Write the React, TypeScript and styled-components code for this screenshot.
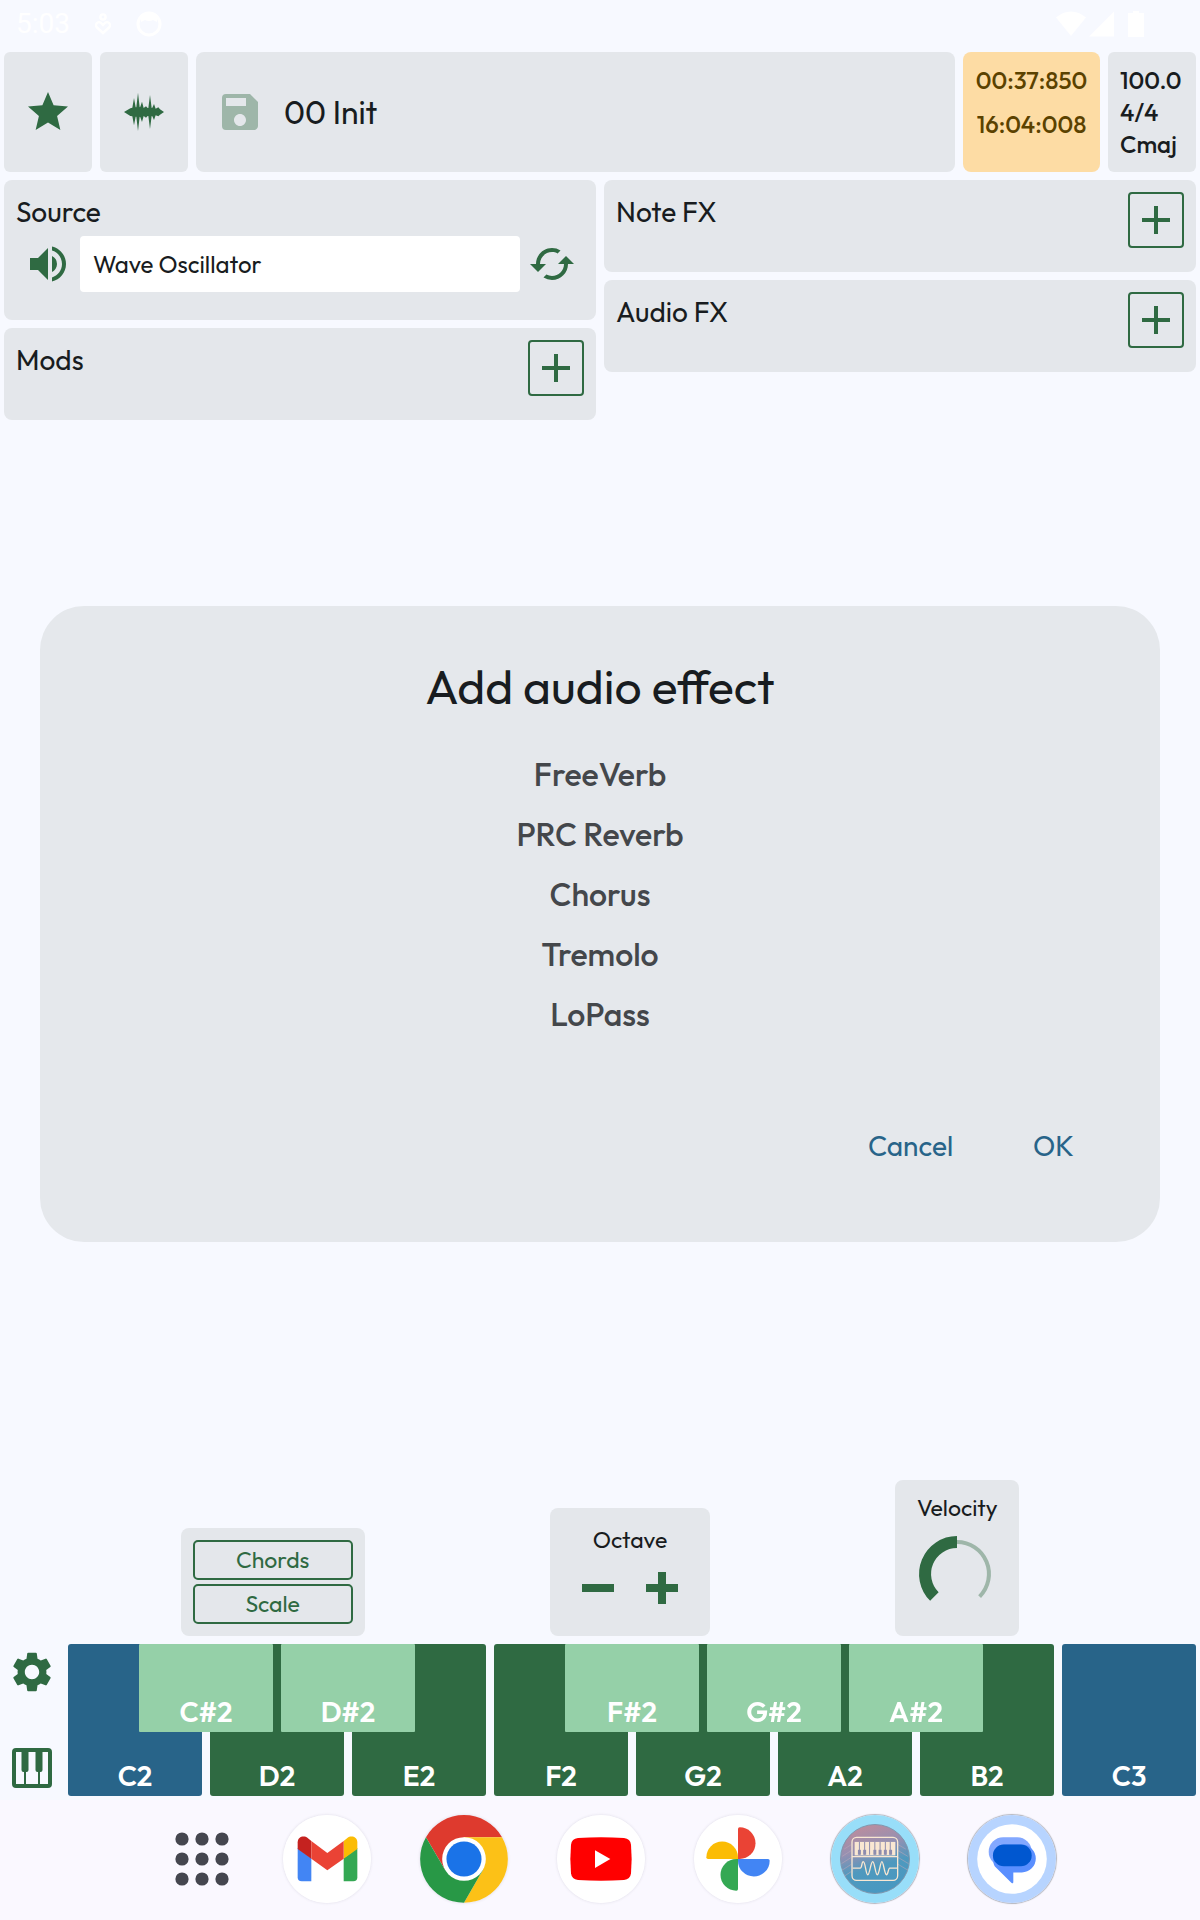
import React from "react";
import styled, { createGlobalStyle } from "styled-components";
import {
  MdStar,
  MdSave,
  MdVolumeUp,
  MdCached,
  MdSettings,
} from "react-icons/md";

const color = {
  page: "#f7f9ff",
  dock: "#faf8ff",
  card: "#e4e7eb",
  ink: "#181c20",
  muted: "#44474b",
  green: "#2f6a42",
  greenSoft: "#9eb6a9",
  mint: "#95d0a8",
  blue: "#286489",
  amber: "#fddca4",
  amberInk: "#5b4200",
};

const Global = createGlobalStyle`
  *, *::before, *::after { box-sizing: border-box; }
  body { margin: 0; background: ${color.page}; }
  button, select { font: inherit; color: inherit; border: 0; padding: 0; margin: 0; background: none; }
  button { cursor: pointer; }
  svg { display: block; flex: none; }
`;

const Page = styled.div`
  min-height: 100vh;
  display: flex;
  flex-direction: column;
  color: ${color.ink};
  font-family: Outfit, Lato, "Open Sans", sans-serif;
`;

const StatusBar = styled.header`
  height: 52px;
  padding: 0 56px 4px 16px;
  display: flex;
  align-items: center;
  justify-content: space-between;
  color: #fff;
  font: 400 28px/48px Roboto, sans-serif;
`;

const StatusGroup = styled.div<{ $gap: number }>`
  display: flex;
  align-items: center;
  gap: ${(p) => p.$gap}px;
`;

const Main = styled.main`
  flex: 1;
  display: flex;
  flex-direction: column;
  gap: 8px;
  padding: 0 4px 4px;
`;

const Toolbar = styled.div`
  display: flex;
  gap: 8px;
  height: 120px;
`;

const Tile = styled.button`
  width: 88px;
  border-radius: 6px;
  background: ${color.card};
  color: ${color.green};
  display: grid;
  place-items: center;
`;

const PresetBar = styled.div`
  flex: 1;
  display: flex;
  align-items: center;
  gap: 20px;
  padding: 0 20px;
  border-radius: 8px;
  background: ${color.card};
`;

const IconButton = styled.button`
  color: ${color.green};
  &:disabled { color: ${color.greenSoft}; }
`;

const PresetName = styled.span`
  font-size: 32px;
  line-height: 40px;
`;

const Clock = styled.div`
  width: 137px;
  padding: 14px 12px;
  display: flex;
  flex-direction: column;
  align-items: center;
  gap: 16px;
  border-radius: 8px;
  background: ${color.amber};
  color: ${color.amberInk};
  font-size: 24px;
  font-weight: 500;
  line-height: 28px;
`;

const Tempo = styled.button`
  width: 88px;
  padding: 12px;
  border-radius: 6px;
  background: ${color.card};
  text-align: left;
  font-size: 24px;
  font-weight: 500;
  line-height: 32px;
  display: flex;
  flex-direction: column;
  justify-content: center;
`;

const Columns = styled.div`
  display: grid;
  grid-template-columns: 1fr 1fr;
  gap: 8px;
  align-items: start;
`;

const Column = styled.div`
  display: flex;
  flex-direction: column;
  gap: 8px;
`;

const Panel = styled.section`
  padding: 12px 12px 24px;
  border-radius: 8px;
  background: ${color.card};
`;

const PanelHead = styled.div`
  display: flex;
  justify-content: space-between;
  align-items: flex-start;
`;

const PanelTitle = styled.h2`
  margin: 0;
  font-size: 28px;
  font-weight: 400;
  line-height: 40px;
`;

const AddButton = styled.button`
  width: 56px;
  height: 56px;
  border: 2px solid ${color.green};
  border-radius: 4px;
  color: ${color.green};
  display: grid;
  place-items: center;
`;

const SourceRow = styled.div`
  display: flex;
  align-items: center;
  gap: 8px;
  padding: 4px 8px;
`;

const SourceSelect = styled.select`
  flex: 1;
  min-width: 0;
  height: 56px;
  padding: 0 13px;
  appearance: none;
  border-radius: 4px;
  background: #fff;
  font-size: 24px;
`;

const Overlay = styled.div`
  position: fixed;
  inset: 0 0 72px;
  display: flex;
  align-items: center;
  padding: 0 40px;
  pointer-events: none;
`;

const Dialog = styled.div`
  flex: 1;
  padding: 50px 46px 72px;
  border-radius: 44px;
  background: #e5e8ec;
  pointer-events: auto;
`;

const DialogTitle = styled.h1`
  margin: 0 0 28px;
  text-align: center;
  font-size: 48px;
  font-weight: 400;
  line-height: 60px;
`;

const EffectList = styled.ul`
  list-style: none;
  margin: 0 0 78px;
  padding: 0;
  display: flex;
  flex-direction: column;
  align-items: center;
`;

const EffectButton = styled.button`
  color: ${color.muted};
  font-size: 32px;
  font-weight: 500;
  line-height: 60px;
`;

const DialogActions = styled.div`
  display: flex;
  justify-content: flex-end;
`;

const DialogButton = styled.button`
  padding: 0 40px;
  color: ${color.blue};
  font-size: 28px;
  line-height: 48px;
`;

const Controls = styled.div`
  margin-top: auto;
  padding: 0 84px;
  display: flex;
  justify-content: space-around;
  align-items: flex-end;
`;

const ControlCard = styled.div<{ $width: number; $pad: string }>`
  width: ${(p) => p.$width}px;
  padding: ${(p) => p.$pad};
  border-radius: 8px;
  background: ${color.card};
  display: flex;
  flex-direction: column;
  font-size: 23px;
  line-height: 24px;
  text-align: center;
`;

const ToggleButton = styled.button`
  height: 40px;
  border: 2px solid ${color.green};
  border-radius: 5px;
  color: ${color.green};
  & + & { margin-top: 4px; }
`;

const Steppers = styled.div`
  display: flex;
  margin-top: 12px;
`;

const StepButton = styled.button`
  width: 64px;
  height: 48px;
  display: grid;
  place-items: center;
  color: ${color.green};
`;

const Knob = styled.div`
  position: relative;
  align-self: center;
  margin-top: 14px;
`;

const KnobInput = styled.input`
  position: absolute;
  inset: 0;
  width: 100%;
  height: 100%;
  margin: 0;
  opacity: 0;
`;

const Piano = styled.div`
  display: flex;
`;

const PianoSide = styled.div`
  width: 64px;
  padding: 4px 8px 8px 0;
  display: flex;
  flex-direction: column;
  align-items: center;
  justify-content: space-between;
`;

const Keys = styled.div`
  flex: 1;
  display: grid;
  grid-template-columns: repeat(16, 1fr);
  grid-template-rows: 88px 64px;
  column-gap: 8px;
`;

const Key = styled.button<{ $col: number; $fill: string; $sharp?: boolean }>`
  grid-column: ${(p) => p.$col} / span 2;
  grid-row: ${(p) => (p.$sharp ? "1" : "1 / span 2")};
  z-index: ${(p) => (p.$sharp ? 1 : 0)};
  border-radius: ${(p) => (p.$sharp ? 1 : 3)}px;
  background: ${(p) => p.$fill};
  color: #fff;
  display: flex;
  align-items: flex-end;
  justify-content: center;
  font-size: 28px;
  font-weight: 600;
  line-height: 40px;
`;

const Dock = styled.nav`
  height: 120px;
  padding: 0 0 2px 26px;
  background: ${color.dock};
  display: flex;
  align-items: center;
  justify-content: center;
  gap: 49px;
`;

const DockButton = styled.button<{ $width?: number; $ring?: boolean }>`
  width: ${(p) => p.$width ?? 88}px;
  height: 88px;
  border-radius: 50%;
  display: grid;
  place-items: center;
  box-shadow: ${(p) =>
    p.$ring ? "0 0 1px 1px #b4b7c0" : p.$width ? "none" : "0 0 3px rgba(60, 60, 90, 0.16)"};
`;

const Plus = ({ size, weight }: { size: number; weight: number }) => (
  <svg width={size} height={size} viewBox={`0 0 ${size} ${size}`} fill="currentColor">
    <rect x={(size - weight) / 2} width={weight} height={size} />
    <rect y={(size - weight) / 2} width={size} height={weight} />
  </svg>
);

const Waveform = () => (
  <svg width="40" height="40" viewBox="0 0 120 120" fill="currentColor">
    <path d="M0 60 19 49 25 47 30 18 35 46 37 46 42 2 47 46 49 44 54 29 59 48 66 43 71 48 73 48 78 9 83 48 85 47 90 36 95 50 103 46 108 52 120 60 108 68 103 73 95 70 90 84 85 73 83 72 78 111 73 72 71 72 66 77 59 72 54 90 49 76 47 74 42 117 37 74 35 74 30 100 25 73 19 72Z" />
  </svg>
);

const PianoGlyph = () => (
  <svg width="40" height="40" viewBox="0 0 40 40" fill="none">
    <rect x="2" y="2" width="36" height="36" rx="2" stroke={color.green} strokeWidth="4" />
    <path
      fill={color.green}
      d="M9.500 3h7v19a2 2 0 0 1-2 2h-.5v13h-2v-13h-.5a2 2 0 0 1-2-2zM23.500 3h7v19a2 2 0 0 1-2 2h-.5v13h-2v-13h-.5a2 2 0 0 1-2-2z"
    />
  </svg>
);

const MicHeart = () => (
  <svg width="16" height="22" viewBox="0 0 16 22" fill="none" stroke="#fff" strokeWidth="2.400">
    <circle cx="8" cy="4" r="2.600" />
    <path d="M8 20 2 14.500a3 3 0 0 1 4-4.500l2 2 2-2a3 3 0 0 1 4 4.500z" />
  </svg>
);

const FaceGlyph = () => (
  <svg width="26" height="26" viewBox="0 0 26 26">
    <circle cx="13" cy="13" r="11" fill="none" stroke="#fff" strokeWidth="3" />
    <path fill="#fff" d="M5 11c-1-6 3-9 8-9s9 3 8 9l-4-2q-4 2-8 0z" />
  </svg>
);

const Signals = () => (
  <svg width="88" height="26" viewBox="0 0 88 26" fill="#fff">
    <path d="M0 6.500C9-1.500 21-1.500 30 6.500L15 25ZM33 25.500 58 .5v25zM77 0h6v2h5v24H72V2h5z" />
  </svg>
);

const VelocityArc = () => (
  <svg width="80" height="80" viewBox="0 0 80 80" fill="none">
    <path d="M40 8a32 32 0 0 1 22.600 54.600" stroke={color.greenSoft} strokeWidth="4" />
    <path d="M17.400 62.600A32 32 0 0 1 40 8" stroke={color.green} strokeWidth="12" />
  </svg>
);

const AppsGlyph = () => (
  <svg width="54" height="54" viewBox="-27 -27 54 54" fill="#45464f">
    {[-20, 0, 20].map((y) =>
      [-20, 0, 20].map((x) => <circle key={`${x},${y}`} cx={x} cy={y} r="6.600" />)
    )}
  </svg>
);

const Gmail = () => (
  <svg width="88" height="88" viewBox="398 46 264 264">
    <circle cx="530" cy="178" r="132" fill="#fff" />
    <path fill="#4285f4" d="M442 145l41 31v69h-29q-12 0-12-12z" />
    <path fill="#34a853" d="M621 145l-41 31v69h29q12 0 12-12z" />
    <path fill="#c5221f" d="M442 148v-20c0-17 19-22 30-13l11 9v53z" />
    <path fill="#fbbc04" d="M621 148v-20c0-17-19-22-30-13l-11 9v53z" />
    <path fill="#ea4335" d="M483 124l48 36 49-36v53l-49 35-48-35z" />
  </svg>
);

const Chrome = () => (
  <svg width="88" height="88" viewBox="-133 -133 266 266">
    <path fill="#de3a2e" d="M-115-66A132.500 132.500 0 0 1 115-66H0L-57 33z" />
    <path fill="#fcc117" d="M115-66A132.500 132.500 0 0 1 0 132.500L57 33 0-66z" />
    <path fill="#289846" d="M0 132.500A132.500 132.500 0 0 1-115-66L-57 33H57z" />
    <circle r="66" fill="#fff" />
    <circle r="53" fill="#1a73e8" />
  </svg>
);

const YouTube = () => (
  <svg width="88" height="88" viewBox="1220 46 264 264">
    <circle cx="1352" cy="178" r="132" fill="#fff" />
    <path
      fill="#f00"
      d="M1283 115q69-4 138 0 19 2 21 20 4 43 0 86-2 18-21 20-69 4-138 0-19-2-21-20-4-43 0-86 2-18 21-20z"
    />
    <path fill="#fff" d="M1334 152l46 26-46 27z" />
  </svg>
);

const Photos = () => (
  <svg width="88" height="88" viewBox="-132 -132 264 264">
    <circle r="132" fill="#fff" />
    {["#ea4335", "#4285f4", "#34a853", "#fbbc04"].map((fill, i) => (
      <path
        key={fill}
        fill={fill}
        transform={`rotate(${i * 90})`}
        d="M0-90q0-5 5-5a47.500 47.500 0 0 1 0 95H0z"
      />
    ))}
  </svg>
);

const SynthApp = () => (
  <svg width="88" height="88" viewBox="600 44 268 268">
    <defs>
      <linearGradient id="synth-sky" x1="0.3" y1="0" x2="0.6" y2="1">
        <stop offset="0.05" stopColor="#b98d9f" />
        <stop offset="0.35" stopColor="#9490b2" />
        <stop offset="0.62" stopColor="#4f99be" />
        <stop offset="1" stopColor="#4898c1" />
      </linearGradient>
    </defs>
    <circle cx="734" cy="178" r="134" fill="#98def9" />
    <circle cx="734" cy="178" r="105" fill="url(#synth-sky)" stroke="#8095ac" strokeWidth="3" />
    <g fill="none" stroke="#b9a6b8" strokeWidth="2.500" opacity="0.7">
      <path d="M640 148l22-14M634 170l28-18M632 192l30-19M634 212l28-18M641 230l21-14M828 148l-24-14M834 170l-30-18M836 192l-32-19M834 212l-30-18" />
    </g>
    <g fill="none" stroke="#f9e7d2" strokeWidth="4">
      <rect x="664" y="112" width="139" height="131" rx="14" />
      <path d="M664 171h139M666 206h23c6 0 4-20 9-20 7 0 8 40 14 40s9-40 15-40 8 40 14 40 9-40 14-40 8 40 14 40c5 0 5-20 10-20h24" />
    </g>
    <rect x="672" y="126" width="124" height="41" fill="#f9e7d2" />
    <g fill="#8d8cae">
      {[682, 698, 729, 745, 761, 777].map((x) => (
        <rect key={x} x={x} y="150" width="9" height="15" />
      ))}
      {[686, 702, 717, 733, 749, 765, 780].map((x) => (
        <rect key={x} x={x - 1} y="126" width="3" height="39" />
      ))}
    </g>
  </svg>
);

const Messages = () => (
  <svg width="88" height="88" viewBox="1010 44 268 268">
    <circle cx="1144" cy="178" r="134" fill="#b7d4ff" />
    <circle cx="1144" cy="178" r="106" fill="#fff" />
    <rect x="1073" y="112" width="131" height="88" rx="44" fill="#83a8ff" />
    <path
      fill="#5a8fff"
      d="M1119 134h55a42 42 0 0 1 0 85h-26v28q0 8-6 3l-50-49q-6-8-6-34a33 33 0 0 1 33-33z"
    />
    <rect x="1086" y="134" width="118" height="66" rx="33" fill="#0057d0" />
  </svg>
);

const effects = ["FreeVerb", "PRC Reverb", "Chorus", "Tremolo", "LoPass"];
const naturals = ["C2", "D2", "E2", "F2", "G2", "A2", "B2", "C3"];
const sharps: [string, number][] = [
  ["C#2", 2],
  ["D#2", 4],
  ["F#2", 8],
  ["G#2", 10],
  ["A#2", 12],
];

const RackPanel = ({ title }: { title: string }) => (
  <Panel>
    <PanelHead>
      <PanelTitle>{title}</PanelTitle>
      <AddButton aria-label={`Add ${title}`}>
        <Plus size={28} weight={4} />
      </AddButton>
    </PanelHead>
  </Panel>
);

export default function App() {
  return (
    <Page>
      <Global />
      <StatusBar>
        <StatusGroup $gap={25}>
          <span>5:03</span>
          <MicHeart />
          <FaceGlyph />
        </StatusGroup>
        <Signals />
      </StatusBar>

      <Main>
        <Toolbar>
          <Tile aria-label="Favorites">
            <MdStar size={48} />
          </Tile>
          <Tile aria-label="Waveform">
            <Waveform />
          </Tile>
          <PresetBar>
            <IconButton disabled aria-label="Save preset">
              <MdSave size={48} />
            </IconButton>
            <PresetName>00 Init</PresetName>
          </PresetBar>
          <Clock>
            <span>00:37:850</span>
            <span>16:04:008</span>
          </Clock>
          <Tempo>
            <span>100.0</span>
            <span>4/4</span>
            <span>Cmaj</span>
          </Tempo>
        </Toolbar>

        <Columns>
          <Column>
            <Panel>
              <PanelTitle as="label" htmlFor="source">
                Source
              </PanelTitle>
              <SourceRow>
                <IconButton aria-label="Mute source">
                  <MdVolumeUp size={48} />
                </IconButton>
                <SourceSelect id="source">
                  <option>Wave Oscillator</option>
                </SourceSelect>
                <IconButton aria-label="Replace source">
                  <MdCached size={48} />
                </IconButton>
              </SourceRow>
            </Panel>
            <RackPanel title="Mods" />
          </Column>
          <Column>
            <RackPanel title="Note FX" />
            <RackPanel title="Audio FX" />
          </Column>
        </Columns>

        <Controls>
          <ControlCard $width={184} $pad="12px">
            <ToggleButton>Chords</ToggleButton>
            <ToggleButton>Scale</ToggleButton>
          </ControlCard>
          <ControlCard $width={160} $pad="20px 16px 24px">
            <span>Octave</span>
            <Steppers>
              <StepButton aria-label="Octave down">
                <svg width="32" height="8" viewBox="0 0 32 8">
                  <rect width="32" height="8" fill="currentColor" />
                </svg>
              </StepButton>
              <StepButton aria-label="Octave up">
                <Plus size={32} weight={8} />
              </StepButton>
            </Steppers>
          </ControlCard>
          <ControlCard $width={124} $pad="16px 16px 22px">
            <label htmlFor="velocity">Velocity</label>
            <Knob>
              <VelocityArc />
              <KnobInput id="velocity" type="range" min={0} max={127} defaultValue={64} />
            </Knob>
          </ControlCard>
        </Controls>

        <Piano>
          <PianoSide>
            <IconButton aria-label="Settings">
              <MdSettings size={48} />
            </IconButton>
            <IconButton aria-label="Keyboard layout">
              <PianoGlyph />
            </IconButton>
          </PianoSide>
          <Keys>
            {naturals.map((note, i) => (
              <Key
                key={note}
                $col={i * 2 + 1}
                $fill={note.startsWith("C") ? color.blue : color.green}
              >
                {note}
              </Key>
            ))}
            {sharps.map(([note, col]) => (
              <Key key={note} $col={col} $fill={color.mint} $sharp>
                {note}
              </Key>
            ))}
          </Keys>
        </Piano>
      </Main>

      <Dock aria-label="Taskbar">
        <DockButton $width={64} aria-label="All apps">
          <AppsGlyph />
        </DockButton>
        <DockButton aria-label="Gmail">
          <Gmail />
        </DockButton>
        <DockButton aria-label="Chrome">
          <Chrome />
        </DockButton>
        <DockButton aria-label="YouTube">
          <YouTube />
        </DockButton>
        <DockButton aria-label="Photos">
          <Photos />
        </DockButton>
        <DockButton $ring aria-label="Synth">
          <SynthApp />
        </DockButton>
        <DockButton $ring aria-label="Messages">
          <Messages />
        </DockButton>
      </Dock>

      <Overlay>
        <Dialog role="dialog" aria-labelledby="dialog-title">
          <DialogTitle id="dialog-title">Add audio effect</DialogTitle>
          <EffectList>
            {effects.map((name) => (
              <li key={name}>
                <EffectButton>{name}</EffectButton>
              </li>
            ))}
          </EffectList>
          <DialogActions>
            <DialogButton>Cancel</DialogButton>
            <DialogButton>OK</DialogButton>
          </DialogActions>
        </Dialog>
      </Overlay>
    </Page>
  );
}
